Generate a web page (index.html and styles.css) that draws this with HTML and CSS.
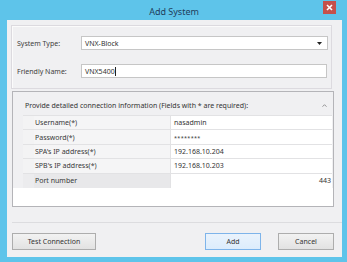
FILE: index.html
```html
<!DOCTYPE html>
<html>
<head>
<meta charset="utf-8">
<link rel="stylesheet" href="styles.css">
</head>
<body>
<div class="window">
  <div class="titlebar">
    <span></span>
    <span class="title">Add System</span>
    <span class="close">
      <svg width="7" height="7" viewBox="0 0 7 7"><path d="M1 1 L6 6 M6 1 L1 6" stroke="#fff" stroke-width="1.6"/></svg>
    </span>
  </div>
  <div class="client">
    <div class="group">
      <div class="field">
        <span class="label">System Type:</span>
        <div class="combo"><span>VNX-Block</span>
          <svg class="arrow" width="5" height="3" viewBox="0 0 5 3"><path d="M0 0 H5 L2.5 3 Z" fill="#222"/></svg>
        </div>
      </div>
      <div class="field">
        <span class="label">Friendly Name:</span>
        <div class="textbox"><span>VNX5400</span><span class="caret"></span></div>
      </div>
    </div>
    <div class="panel">
      <div class="panel-top">
        <div class="panel-head">
          <span>Provide detailed connection information (Fields with * are required):</span>
          <svg class="chev" width="5" height="3" viewBox="0 0 5 3"><path d="M0.5 2.7 L2.5 0.7 L4.5 2.7" fill="none" stroke="#888" stroke-width="0.9"/></svg>
        </div>
        <div class="grid">
          <div class="row"><span class="k">Username(*)</span><span class="v">nasadmin</span></div>
          <div class="row"><span class="k">Password(*)</span><span class="v stars">********</span></div>
          <div class="row"><span class="k">SPA's IP address(*)</span><span class="v">192.168.10.204</span></div>
          <div class="row"><span class="k">SPB's IP address(*)</span><span class="v">192.168.10.203</span></div>
          <div class="row sel"><span class="k">Port number</span><span class="v num">443</span></div>
        </div>
      </div>
      <div class="panel-foot"></div>
    </div>
    <div class="sep"></div>
    <div class="buttons">
      <button class="btn test">Test Connection</button>
      <div class="right">
        <button class="btn default">Add</button>
        <button class="btn">Cancel</button>
      </div>
    </div>
  </div>
</div>
</body>
</html>
```
FILE: styles.css
```css
* { box-sizing: border-box; }
html, body { margin: 0; padding: 0; }
body {
  width: 347px;
  height: 262px;
  background: #5ec4ea;
  font-family: "Noto Sans", "Open Sans", sans-serif;
  font-size: 7px;
  color: #3a3a3a;
  overflow: hidden;
}
.window {
  width: 347px;
  height: 262px;
  display: flex;
  flex-direction: column;
  background: #5ec4ea;
}
.titlebar {
  height: 20px;
  display: grid;
  grid-template-columns: 1fr auto 1fr;
  align-items: start;
}
.title {
  font-size: 9px;
  color: #1f3d5c;
  line-height: 24px;
  margin-left: 1px;
}
.close {
  justify-self: end;
  margin-right: 11px;
  margin-top: 1px;
  width: 13px;
  height: 13px;
  background: #c5504a;
  display: flex;
  align-items: center;
  justify-content: center;
}
.client {
  flex: 1;
  margin: 0 5px 5px 7px;
  background: #f0f0f2;
  display: flex;
  flex-direction: column;
  padding-bottom: 7px;
}
.group {
  margin: 5px 10px 0 4px;
  height: 64px;
  border: 1px solid #dcdadf;
  box-shadow: inset 1px 1px 0 #fbfbfb;
  padding: 10px 3px 0 5px;
  display: flex;
  flex-direction: column;
  gap: 14px;
}
.field {
  display: flex;
  align-items: center;
  height: 14px;
}
.label {
  width: 64px;
  color: #404040;
}
.combo, .textbox {
  flex: 1;
  height: 14px;
  background: #fff;
  border: 1px solid #c6c6c6;
  display: flex;
  align-items: center;
  padding-left: 3px;
  color: #333;
}
.textbox { margin-right: 1px; }
.combo span { flex: 1; }
.arrow { margin-right: 5px; }
.caret {
  width: 1px;
  height: 9px;
  background: #222;
  margin-left: 0.5px;
}
.panel {
  margin: 2px 8px 0 5px;
  height: 116px;
  border: 1px solid #b4b4b8;
  display: flex;
  flex-direction: column;
}
.panel-top {
  background: #f0f0f2;
  padding: 0 1px 0 10px;
}
.panel-head {
  height: 23px;
  display: flex;
  align-items: flex-end;
  padding: 0 5px 5px 2px;
  color: #333;
}
.panel-head span { flex: 1; }
.chev { margin-bottom: 3px; }
.grid {
  background: #f0f0f2;
  border-top: 1px solid #e2e2e4;
}
.row {
  display: flex;
  height: 14.4px;
  border-bottom: 1px solid #e2e2e4;
  align-items: center;
}
.k {
  width: 147px;
  background: #f5f5f6;
  height: 100%;
  display: flex;
  align-items: center;
  border-left: 11px solid #f3f3f4;
  padding-left: 1px;
  color: #383838;
}
.v {
  flex: 1;
  background: #fff;
  height: 100%;
  display: flex;
  align-items: center;
  padding-left: 3px;
  border-left: 1px solid #e2e2e4;
  color: #333;
}
.v.stars { font-size: 5.5px; letter-spacing: 0.3px; padding-top: 1px; }
.v.num { justify-content: flex-end; padding-right: 1px; }
.row.sel .k { background: #e8e8ea; border-left-color: #ececee; }
.row.sel { border-bottom: none; }
.panel-foot {
  flex: 1;
  background: #fff;
}
.sep {
  margin-top: 15px;
  height: 1px;
  background: #dcdcdf;
  margin-left: 5px;
}
.buttons {
  margin-top: 10px;
  display: flex;
  justify-content: space-between;
  padding: 0 8px 0 5px;
}
.right { display: flex; gap: 17px; }
.btn {
  height: 17px;
  width: 56px;
  border: 1px solid #adadad;
  background: linear-gradient(#f2f2f2, #e2e2e2);
  font-family: "Noto Sans", "Open Sans", sans-serif;
  font-size: 7px;
  color: #333;
  padding: 0;
}
.btn.test { width: 84px; }
.btn.default {
  border-color: #7eb4ea;
  background: linear-gradient(#eaf3fc, #dcecfc);
}
```
